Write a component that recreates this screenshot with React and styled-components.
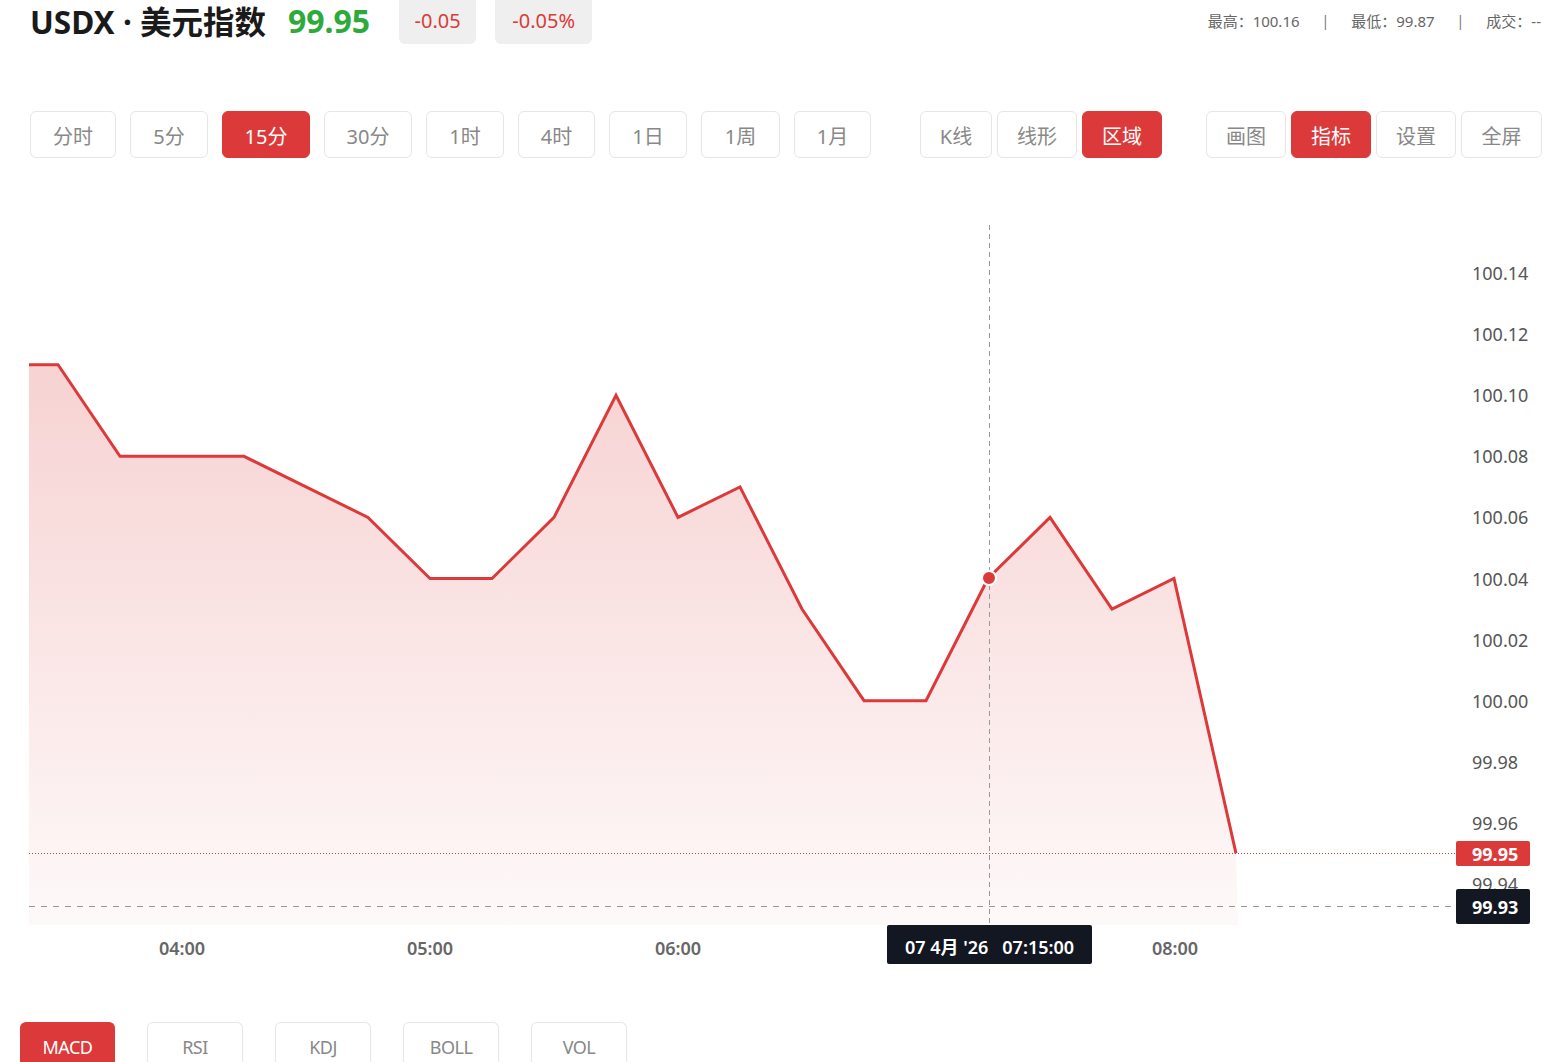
import styled, { createGlobalStyle } from "styled-components";

const GlobalStyle = createGlobalStyle`
  html, body {
    margin: 0;
    padding: 0;
    background: #fff;
    overflow: hidden;
  }

  body {
    font-family: "Noto Sans", "Noto Sans CJK SC", sans-serif;
    color: #333;
  }
`;

const RED = "#dc3a3a";
const INK = "#131722";

const Page = styled.div`
  width: 1566px;
  height: 1062px;
  overflow: hidden;
`;

const Header = styled.header`
  align-items: center;
  display: flex;
  height: 40px;
  padding: 0 25px 0 30px;
`;

const Title = styled.h1`
  color: #1a1a1a;
  font-size: 31.5px;
  font-weight: 700;
  margin: 0;
`;

const Price = styled.span`
  color: #2eaa3c;
  font-size: 32px;
  font-weight: 700;
  margin-left: 22px;
`;

const Badge = styled.span`
  align-items: center;
  background: #efefef;
  border-radius: 6px;
  color: ${RED};
  display: flex;
  font-size: 20px;
  height: 48px;
  justify-content: center;
  margin-left: ${({ $first }) => ($first ? "29px" : "19px")};
  width: ${({ $w }) => $w}px;
`;

const Stats = styled.div`
  align-items: center;
  color: #666;
  display: flex;
  font-size: 15px;
  gap: 22px;
  margin-left: auto;
`;

const Sep = styled.span`
  color: #777;
  font-size: 14px;
`;

const Toolbar = styled.div`
  display: flex;
  margin-top: 71px;
  padding-left: 30px;
`;

const Group = styled.div`
  display: flex;
  gap: ${({ $gap }) => $gap}px;
  margin-left: ${({ $offset }) => $offset || 0}px;
`;

const Btn = styled.button`
  align-items: center;
  background: ${({ $active }) => ($active ? RED : "#fff")};
  border: 1px solid ${({ $active }) => ($active ? RED : "#e6e6e6")};
  border-radius: 6px;
  box-sizing: border-box;
  color: ${({ $active }) => ($active ? "#fff" : "#888")};
  display: flex;
  font-family: inherit;
  font-size: 20px;
  height: 47px;
  justify-content: center;
  padding: 2px 0 0;
  width: ${({ $w }) => $w}px;
`;

const ChartBox = styled.div`
  height: 830px;
  margin-top: 12px;
`;

const Tabs = styled.div`
  display: flex;
  gap: 32px;
  margin-top: 22px;
  padding-left: 20px;
`;

const Tab = styled.div`
  align-items: center;
  background: ${({ $active }) => ($active ? RED : "#fff")};
  border: 1px solid ${({ $active }) => ($active ? RED : "#e6e6e6")};
  border-bottom: 0;
  border-radius: 6px 6px 0 0;
  box-sizing: border-box;
  color: ${({ $active }) => ($active ? "#fff" : "#888")};
  display: flex;
  font-size: 18px;
  height: 50px;
  justify-content: center;
  letter-spacing: -0.5px;
  padding-bottom: 1px;
  width: ${({ $active }) => ($active ? 95 : 96)}px;
`;

const PERIODS = [
  ["分时", 86],
  ["5分", 78],
  ["15分", 88, true],
  ["30分", 88],
  ["1时", 78],
  ["4时", 77],
  ["1日", 78],
  ["1周", 79],
  ["1月", 77],
];

const STYLES = [
  ["K线", 72],
  ["线形", 80],
  ["区域", 80, true],
];

const TOOLS = [
  ["画图", 80],
  ["指标", 80, true],
  ["设置", 80],
  ["全屏", 81],
];

const INDICATORS = ["MACD", "RSI", "KDJ", "BOLL", "VOL"];

// price -> page y
const yOf = (p) => 273 + ((100.14 - p) / 0.02) * 61.1;

const SERIES = [
  100.11, 100.11, 100.08, 100.08, 100.08, 100.07, 100.06, 100.04, 100.04,
  100.06, 100.1, 100.06, 100.07, 100.03, 100.0, 100.0, 100.04, 100.06,
  100.03, 100.04, 99.95,
];

function Chart() {
  const points = SERIES.map((p, i) => [i === 0 ? 29 : -4 + i * 62, yOf(p)]);
  points[1][0] = 58;
  const line = points.map(([x, y]) => `${x},${y.toFixed(1)}`).join(" ");
  const area = `29,925 ${line} 1238,925`;
  const ticks = [100.14, 100.12, 100.1, 100.08, 100.06, 100.04, 100.02, 100.0, 99.98, 99.96, 99.94];
  const times = [
    ["04:00", 182],
    ["05:00", 430],
    ["06:00", 678],
    ["08:00", 1175],
  ];

  return (
    <svg width="1566" height="830" viewBox="0 170 1566 830" style={{ display: "block" }}>
      <defs>
        <linearGradient id="fill" x1="0" y1="300" x2="0" y2="925" gradientUnits="userSpaceOnUse">
          <stop offset="0" stopColor={RED} stopOpacity="0.25" />
          <stop offset="1" stopColor={RED} stopOpacity="0.03" />
        </linearGradient>
      </defs>

      <polygon points={area} fill="url(#fill)" />

      <line x1="989.5" y1="225" x2="989.5" y2="925" stroke="#999" strokeDasharray="5 4" />
      <line x1="29" y1="853.5" x2="1456" y2="853.5" stroke="#b44" strokeDasharray="1 2" />
      <line x1="29" y1="906.5" x2="1456" y2="906.5" stroke="#999" strokeDasharray="6 6" />

      <polyline points={line} fill="none" stroke={RED} strokeWidth="3" strokeLinejoin="miter" />
      <circle cx="989" cy="578" r="7" fill={RED} stroke="#fff" strokeWidth="2" />

      <g fontFamily="'Noto Sans', 'Noto Sans CJK SC', sans-serif" fontSize="18">
        {ticks.map((t) => (
          <text key={t} x="1472" y={yOf(t)} dominantBaseline="central" fill="#555">
            {t.toFixed(2)}
          </text>
        ))}

        <rect x="1456" y="841" width="74" height="25" rx="2" fill={RED} />
        <text x="1472" y="854" dominantBaseline="central" fill="#fff" fontWeight="700">
          99.95
        </text>
        <rect x="1456" y="889" width="74" height="35" rx="2" fill={INK} />
        <text x="1472" y="907" dominantBaseline="central" fill="#fff" fontWeight="700">
          99.93
        </text>

        {times.map(([t, x]) => (
          <text key={t} x={x} y="948" textAnchor="middle" dominantBaseline="central" fill="#666" fontWeight="600">
            {t}
          </text>
        ))}

        <rect x="887" y="925" width="205" height="39" rx="2" fill={INK} />
        <text x="989.5" y="947" textAnchor="middle" dominantBaseline="central" fill="#fff" fontWeight="600">
          07 4月 '26{"\u00a0\u00a0\u00a0"}07:15:00
        </text>
      </g>
    </svg>
  );
}

export default function App() {
  return (
    <Page>
      <GlobalStyle />
      <Header>
        <Title>USDX · 美元指数</Title>
        <Price>99.95</Price>
        <Badge $first $w={77}>-0.05</Badge>
        <Badge $w={97}>-0.05%</Badge>
        <Stats>
          <span>最高：100.16</span>
          <Sep>|</Sep>
          <span>最低：99.87</span>
          <Sep>|</Sep>
          <span>成交：--</span>
        </Stats>
      </Header>

      <Toolbar>
        <Group $gap={14}>
          {PERIODS.map(([label, w, active]) => (
            <Btn key={label} $w={w} $active={active}>{label}</Btn>
          ))}
        </Group>
        <Group $gap={5} $offset={49}>
          {STYLES.map(([label, w, active]) => (
            <Btn key={label} $w={w} $active={active}>{label}</Btn>
          ))}
        </Group>
        <Group $gap={5} $offset={44}>
          {TOOLS.map(([label, w, active]) => (
            <Btn key={label} $w={w} $active={active}>{label}</Btn>
          ))}
        </Group>
      </Toolbar>

      <ChartBox>
        <Chart />
      </ChartBox>

      <Tabs>
        {INDICATORS.map((name, i) => (
          <Tab key={name} $active={i === 0}>{name}</Tab>
        ))}
      </Tabs>
    </Page>
  );
}
